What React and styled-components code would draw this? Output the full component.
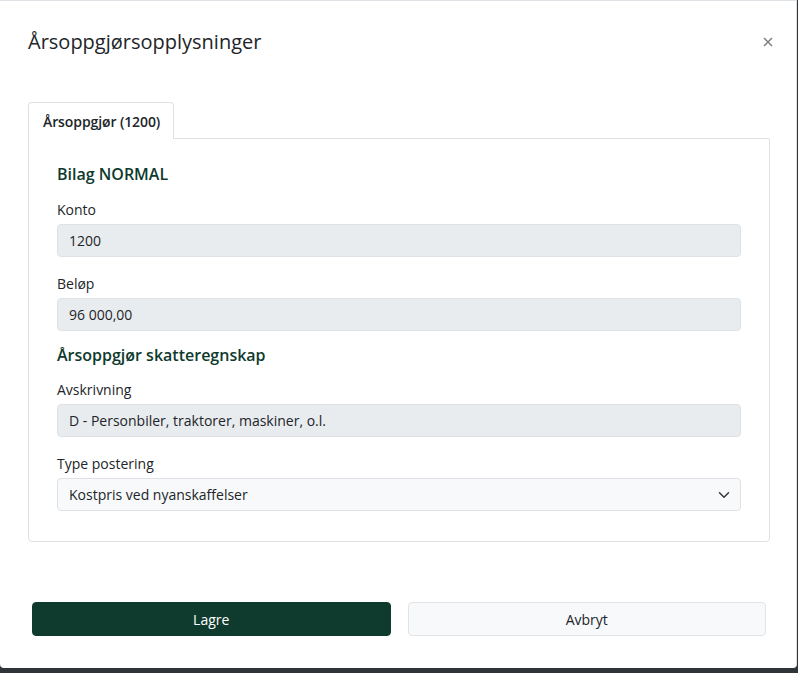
import React from "react"
import styled, { createGlobalStyle } from "styled-components"

const GlobalStyle = createGlobalStyle`
  html, body {
    margin: 0;
    padding: 0;
    background: #2f3438;
    font-family: "Open Sans", "Liberation Sans", sans-serif;
    color: #212529;
  }
  * { box-sizing: border-box; }
`

const Modal = styled.div`
  width: 797px;
  height: 668px;
  background: #fff;
  border-top: 1px solid #dee2e6;
  border-right: 1px solid #dee2e6;
  border-radius: 0 0 4px 4px;
  display: flex;
  flex-direction: column;
`

const Header = styled.div`
  display: flex;
  align-items: center;
  justify-content: space-between;
  padding: 26px 21px 0 28px;
`

const Title = styled.h1`
  margin: 0;
  font-size: 20px;
  font-weight: 400;
  line-height: 30px;
  color: #212529;
`

const CloseButton = styled.button`
  border: none;
  background: none;
  padding: 0;
  width: 14px;
  height: 14px;
  display: flex;
  align-items: center;
  justify-content: center;
  color: #7a7f85;
  cursor: pointer;
`

const Body = styled.div`
  padding: 45px 26px 0 28px;
`

const Tabs = styled.div`
  display: flex;
`

const Tab = styled.div`
  padding: 8px 13px 7px 14px;
  font-size: 14px;
  font-weight: 600;
  line-height: 21px;
  letter-spacing: -0.1px;
  border: 1px solid #dee2e6;
  border-bottom: none;
  border-radius: 4px 4px 0 0;
  background: #fff;
  margin-bottom: -1px;
  position: relative;
`

const Panel = styled.div`
  border: 1px solid #dee2e6;
  border-radius: 0 0 4px 4px;
  padding: 23px 28px 30px 28px;
  display: flex;
  flex-direction: column;
`

const SectionTitle = styled.h2`
  margin: ${p => (p.$first ? "0 0 13px" : "12px 0 12px")};
  font-size: 16px;
  font-weight: 600;
  line-height: 24px;
  color: #0e3a2d;
`

const Field = styled.div`
  display: flex;
  flex-direction: column;
  margin-bottom: ${p => (p.$last ? "0" : "16px")};
`

const Label = styled.label`
  font-size: 14px;
  line-height: 21px;
  margin-bottom: 4px;
  color: #212529;
`

const ReadOnly = styled.div`
  height: 33px;
  display: flex;
  align-items: center;
  padding: 0 11px;
  font-size: 14px;
  background: #e9ecef;
  border: 1px solid #dee2e6;
  border-radius: 4px;
  color: #212529;
`

const Select = styled.div`
  height: 33px;
  display: flex;
  align-items: center;
  justify-content: space-between;
  padding: 0 10px 0 11px;
  font-size: 14px;
  background: #f8f9fa;
  border: 1px solid #dee2e6;
  border-radius: 4px;
  color: #212529;
`

const Footer = styled.div`
  margin-top: auto;
  padding: 0 30px 32px 32px;
  display: grid;
  grid-template-columns: 1fr 1fr;
  gap: 17px;
`

const Button = styled.button`
  height: 34px;
  font-family: inherit;
  font-size: 14px;
  border-radius: 4px;
  cursor: pointer;
  border: 1px solid ${p => (p.$primary ? "#0f3b2e" : "#e2e5e8")};
  background: ${p => (p.$primary ? "#0f3b2e" : "#f8f9fa")};
  color: ${p => (p.$primary ? "#fff" : "#212529")};
`

export default function App() {
  return (
    <>
      <GlobalStyle />
      <Modal>
        <Header>
          <Title>Årsoppgjørsopplysninger</Title>
          <CloseButton aria-label="Lukk">
            <svg width="10" height="10" viewBox="0 0 10 10">
              <path d="M1 1 L9 9 M9 1 L1 9" stroke="currentColor" strokeWidth="1.5" />
            </svg>
          </CloseButton>
        </Header>
        <Body>
          <Tabs>
            <Tab>Årsoppgjør (1200)</Tab>
          </Tabs>
          <Panel>
            <SectionTitle $first>Bilag NORMAL</SectionTitle>
            <Field>
              <Label>Konto</Label>
              <ReadOnly>1200</ReadOnly>
            </Field>
            <Field $last>
              <Label>Beløp</Label>
              <ReadOnly>96 000,00</ReadOnly>
            </Field>
            <SectionTitle>Årsoppgjør skatteregnskap</SectionTitle>
            <Field>
              <Label>Avskrivning</Label>
              <ReadOnly>D - Personbiler, traktorer, maskiner, o.l.</ReadOnly>
            </Field>
            <Field $last>
              <Label>Type postering</Label>
              <Select>
                <span>Kostpris ved nyanskaffelser</span>
                <svg width="12" height="12" viewBox="0 0 16 16">
                  <path d="M2 5 L8 11 L14 5" fill="none" stroke="#343a40" strokeWidth="2" strokeLinecap="round" strokeLinejoin="round" />
                </svg>
              </Select>
            </Field>
          </Panel>
        </Body>
        <Footer>
          <Button $primary>Lagre</Button>
          <Button>Avbryt</Button>
        </Footer>
      </Modal>
    </>
  )
}
